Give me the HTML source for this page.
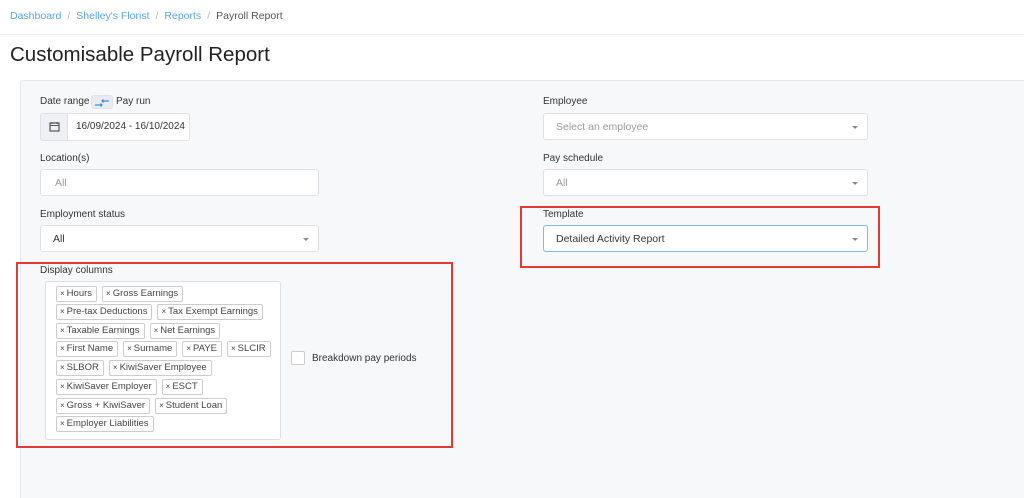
<!DOCTYPE html><html><head><style>
*{box-sizing:border-box;margin:0;padding:0}
html,body{width:1024px;height:498px;overflow:hidden}
body{background:#fff;font-family:"Liberation Sans",sans-serif;color:#333;position:relative}
.a{position:absolute}
.bc{left:10px;top:10px;font-size:10.5px;color:#5aa6e0}
.bc span.s{color:#bbb;margin:0 6px}
.bc span.c{color:#555}
h1{position:absolute;left:10px;top:43px;font-size:20.5px;font-weight:normal;color:#222}
.panel{left:20px;top:80px;width:1010px;height:418px;background:#f7f8fa;border:1px solid #e6e8eb;border-bottom:none;border-radius:3px 3px 0 0}
.lbl{font-size:10px;color:#333}
.inp{background:#fff;border:1px solid #dde0e4;border-radius:3px;font-size:10.5px;color:#999;padding-left:12px;display:flex;align-items:center}
.caret{position:absolute;right:9px;top:50%;margin-top:-1px;border-left:3px solid transparent;border-right:3px solid transparent;border-top:3px solid #888}
.tags{left:45px;top:281px;width:236px;height:159px;background:#fff;border:1px solid #dde0e4;border-radius:3px}
.row{position:absolute;left:10px;display:flex;gap:5px}
.t{height:16px;border:1px solid #ccc;border-radius:2px;font-size:9.5px;color:#444;padding:0 4px 0 3px;line-height:14px;white-space:nowrap}
.t b{font-weight:normal;font-size:8px;margin-right:2px}
.red{border:2px solid #e53935}
</style></head><body>
<div class="a bc">Dashboard<span class="s">/</span>Shelley's Florist<span class="s">/</span>Reports<span class="s">/</span><span class="c">Payroll Report</span></div>
<div class="a" style="left:0;top:34px;width:1024px;height:1px;background:#f2f2f2"></div>
<h1>Customisable Payroll Report</h1>
<div class="a panel"></div>
<div class="a lbl" style="left:40px;top:96px">Date range</div>
<div class="a" style="left:91px;top:95px;width:22px;height:14px;background:#e8ecf1;border-radius:3px;border:1px solid #dfe3e8"><svg width="20" height="12" viewBox="0 0 20 12"><path d="M3 8h7M8.5 6.5 10 8 8.5 9.5" stroke="#3a8fd8" fill="none" stroke-width="1.2"/><path d="M17 4h-7M11.5 2.5 10 4l1.5 1.5" stroke="#3a8fd8" fill="none" stroke-width="1.2"/></svg></div>
<div class="a lbl" style="left:116px;top:96px">Pay run</div>
<div class="a" style="left:40px;top:113px;width:150px;height:28px;background:#fff;border:1px solid #dde0e4;border-radius:3px"></div>
<div class="a" style="left:40px;top:113px;width:28px;height:28px;background:#eef0f3;border:1px solid #dde0e4;border-radius:3px 0 0 3px"><svg width="26" height="26" viewBox="0 0 26 26"><rect x="9" y="9" width="9" height="8" fill="none" stroke="#555" stroke-width="1.2"/><path d="M9 11.5h9M11 8v2M16 8v2" stroke="#555"/></svg></div>
<div class="a" style="left:76px;top:121px;font-size:10px;color:#333">16/09/2024 - 16/10/2024</div>
<div class="a lbl" style="left:40px;top:153px">Location(s)</div>
<div class="a inp" style="left:40px;top:169px;width:279px;height:27px;padding-left:14px;align-items:flex-start;padding-top:7px">All</div>
<div class="a lbl" style="left:40px;top:209px">Employment status</div>
<div class="a inp" style="left:40px;top:225px;width:279px;height:27px;color:#333">All<i class="caret"></i></div>
<div class="a lbl" style="left:40px;top:265px">Display columns</div>
<div class="a tags">
<div class="row" style="top:4px"><span class="t"><b>×</b>Hours</span><span class="t"><b>×</b>Gross Earnings</span></div>
<div class="row" style="top:22px"><span class="t"><b>×</b>Pre-tax Deductions</span><span class="t"><b>×</b>Tax Exempt Earnings</span></div>
<div class="row" style="top:41px"><span class="t"><b>×</b>Taxable Earnings</span><span class="t"><b>×</b>Net Earnings</span></div>
<div class="row" style="top:59px"><span class="t"><b>×</b>First Name</span><span class="t"><b>×</b>Surname</span><span class="t"><b>×</b>PAYE</span><span class="t"><b>×</b>SLCIR</span></div>
<div class="row" style="top:78px"><span class="t"><b>×</b>SLBOR</span><span class="t"><b>×</b>KiwiSaver Employee</span></div>
<div class="row" style="top:97px"><span class="t"><b>×</b>KiwiSaver Employer</span><span class="t"><b>×</b>ESCT</span></div>
<div class="row" style="top:116px"><span class="t"><b>×</b>Gross + KiwiSaver</span><span class="t"><b>×</b>Student Loan</span></div>
<div class="row" style="top:134px"><span class="t"><b>×</b>Employer Liabilities</span></div>
</div>
<div class="a" style="left:291px;top:351px;width:14px;height:14px;background:#fff;border:1px solid #ccc;border-radius:2px"></div>
<div class="a" style="left:312px;top:353px;font-size:10px;color:#333">Breakdown pay periods</div>
<div class="a red" style="left:16px;top:262px;width:437px;height:186px"></div>
<div class="a lbl" style="left:543px;top:96px">Employee</div>
<div class="a inp" style="left:543px;top:113px;width:325px;height:27px">Select an employee<i class="caret"></i></div>
<div class="a lbl" style="left:543px;top:153px">Pay schedule</div>
<div class="a inp" style="left:543px;top:169px;width:325px;height:27px">All<i class="caret"></i></div>
<div class="a lbl" style="left:543px;top:209px">Template</div>
<div class="a inp" style="left:543px;top:225px;width:325px;height:27px;color:#333;border-color:#7fb8ee">Detailed Activity Report<i class="caret"></i></div>
<div class="a red" style="left:520px;top:206px;width:360px;height:62px"></div>
</body></html>
